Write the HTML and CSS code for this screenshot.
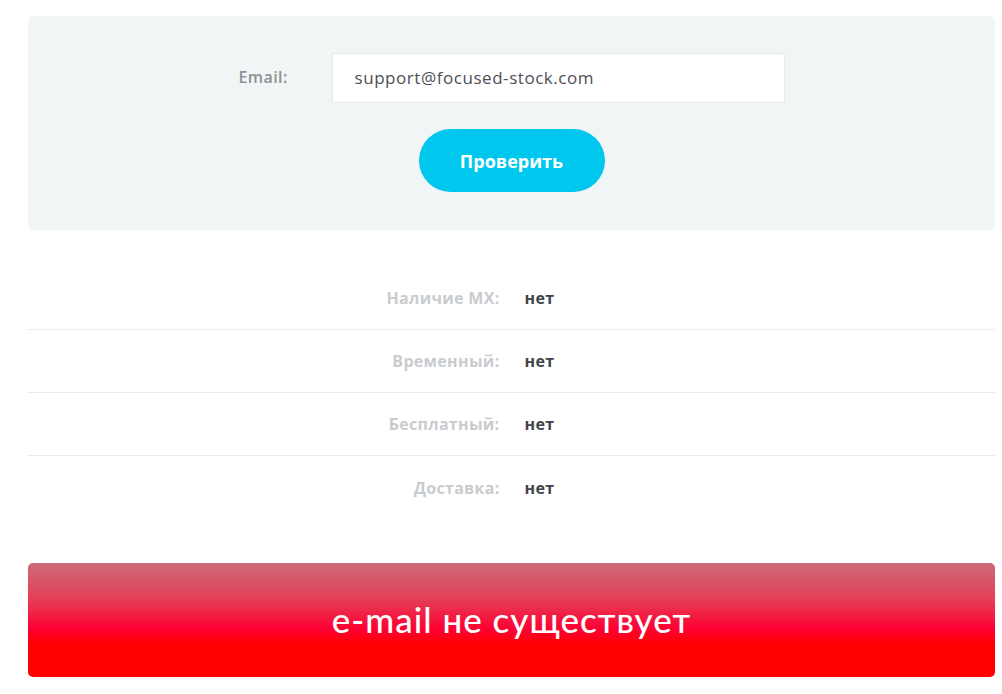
FILE: index.html
```html
<!DOCTYPE html>
<html lang="ru">
<head>
<meta charset="utf-8">
<title>Проверка e-mail</title>
<link rel="stylesheet" href="styles.css">
</head>
<body>
<div class="page">
  <form class="check-box">
    <div class="field-row">
      <label class="field-label" for="email">Email:</label>
      <input class="field-input" id="email" type="text" value="support@focused-stock.com">
    </div>
    <button class="check-btn" type="button">Проверить</button>
  </form>

  <div class="results">
    <div class="result-row">
      <div class="result-label">Наличие MX:</div>
      <div class="result-value">нет</div>
    </div>
    <div class="result-row">
      <div class="result-label">Временный:</div>
      <div class="result-value">нет</div>
    </div>
    <div class="result-row">
      <div class="result-label">Бесплатный:</div>
      <div class="result-value">нет</div>
    </div>
    <div class="result-row">
      <div class="result-label">Доставка:</div>
      <div class="result-value">нет</div>
    </div>
  </div>

  <div class="verdict">e-mail не существует</div>
</div>
</body>
</html>
```

FILE: styles.css
```css
html, body {
  margin: 0;
  padding: 0;
  background: #ffffff;
}

body {
  font-family: "Open Sans", "Liberation Sans", sans-serif;
}

.page {
  padding: 16px 7px 0 28px;
}

.check-box {
  margin: 0;
  background: #f2f5f6;
  border-radius: 5px;
  padding: 37px 0 38px;
  display: flex;
  flex-direction: column;
  align-items: center;
}

.field-row {
  display: flex;
  align-items: center;
  gap: 42px;
}

.field-label {
  width: 51px;
  white-space: nowrap;
  font-size: 16px;
  font-weight: 600;
  letter-spacing: 0.4px;
  color: #8e9194;
  padding-bottom: 2px;
}

.field-input {
  box-sizing: border-box;
  width: 453px;
  height: 50px;
  border: 1px solid #e6eaec;
  border-radius: 2px;
  background: #fff;
  padding: 0 22px 2px;
  font-family: "Open Sans", "Liberation Sans", sans-serif;
  font-size: 17px;
  font-weight: 500;
  letter-spacing: 0.55px;
  color: #4b5056;
  outline: none;
}

.check-btn {
  margin-top: 26px;
  width: 186px;
  height: 63px;
  border: none;
  border-radius: 32px;
  background: #00c7ee;
  color: #fff;
  font-family: "Open Sans", "Liberation Sans", sans-serif;
  font-size: 18px;
  font-weight: 700;
  cursor: pointer;
}

.results {
  margin-top: 37px;
}

.result-row {
  display: grid;
  grid-template-columns: 1fr 1fr;
  align-items: center;
  height: 63px;
  box-sizing: border-box;
  border-bottom: 1px solid #e9ecee;
}

.result-row:last-child {
  border-bottom: none;
}

.result-label {
  text-align: right;
  padding-right: 12px;
  font-size: 16px;
  font-weight: 700;
  letter-spacing: 0.3px;
  color: #c9cccf;
}

.result-value {
  padding-left: 13px;
  font-size: 16px;
  font-weight: 700;
  letter-spacing: 0.4px;
  color: #40454b;
}

.verdict {
  margin-top: 44px;
  height: 114px;
  border-radius: 5px;
  background: linear-gradient(to bottom, #cc6a78 0%, #e34258 30%, #ff0033 58%, #ff0000 72%, #ff0000 100%);
  display: flex;
  align-items: center;
  justify-content: center;
  padding-bottom: 3px;
  box-sizing: border-box;
  color: #fff;
  font-family: "Lato", "Open Sans", sans-serif;
  font-size: 35px;
  font-weight: 500;
  letter-spacing: 1px;
}
```
